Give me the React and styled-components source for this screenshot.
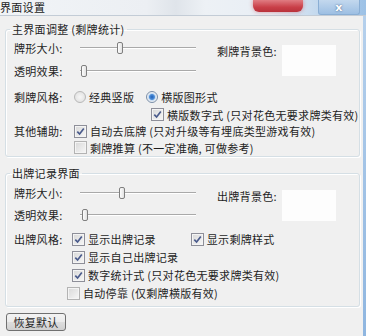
import React from 'react'
import styled, { createGlobalStyle } from 'styled-components'

const GlobalStyle = createGlobalStyle`
  html, body {
    margin: 0;
    padding: 0;
    background: #f0f0f0;
  }
  body {
    font-family: "Noto Sans CJK SC", "Liberation Sans", sans-serif;
    font-size: 11px;
    letter-spacing: 0.3px;
    color: #1e1e1e;
  }
`;

const Window = styled.div`
  width: 366px;
  height: 336px;
  display: flex;
  flex-direction: column;
  overflow: hidden;
  background: #f0f0f0;
`;

const TitleBar = styled.div`
  height: 15px;
  flex: none;
  display: flex;
  align-items: flex-start;
  background: linear-gradient(to right, #f1f4f7 0%, #eceff3 40%, #dfe4ea 48%, #edf1f5 56%, #e8eef5 74%, #c9dcef 85%, #9cc1e6 100%);
  border-bottom: 1px solid #c3ccd6;
`;

const Title = styled.span`
  line-height: 14px;
  color: #222;
`;

const Captions = styled.div`
  margin-left: auto;
  margin-right: 6px;
  display: flex;
  gap: 15px;
`;

const RedPill = styled.div`
  width: 50px;
  height: 12px;
  border-radius: 0 0 6px 6px;
  background: linear-gradient(#e07c82, #c93f48 60%, #b8323b);
  box-shadow: 0 0 4px rgba(200, 60, 70, 0.5);
`;

const CloseButton = styled.div`
  width: 40px;
  height: 14px;
  display: flex;
  align-items: center;
  justify-content: center;
  border-radius: 0 0 3px 3px;
  background: linear-gradient(#c3d8ee, #9dbfe3);
  border: 1px solid #8aaed4;
  border-top: none;
  color: #fff;
  font-family: "DejaVu Sans", sans-serif;
  font-size: 11px;
  font-weight: bold;
  text-shadow: 0 0 2px #3f5f86;
`;

const Body = styled.div`
  flex: 1;
  display: flex;
  min-height: 0;
`;

const Content = styled.div`
  flex: 1;
  display: flex;
  flex-direction: column;
  padding: 6px 3px 0 5px;
`;

const Frame = styled.div`
  width: 4px;
  flex: none;
  background: linear-gradient(#b5d0ec, #8fb6e0);
`;

const GroupBox = styled.fieldset`
  margin: 0 0 ${p => p.$gap || 0}px 0;
  padding: ${p => p.$top}px 0 ${p => p.$bottom}px 8px;
  border: 1px solid #d5dfe5;
  border-radius: 3px;
  box-shadow: inset 1px 1px 0 #fff, 1px 1px 0 #fff;
  min-width: 0;
`;

const Legend = styled.legend`
  margin-left: -4px;
  padding: 0 2px;
  line-height: 14px;
`;

const SliderBlock = styled.div`
  display: flex;
  align-items: flex-start;
`;

const SliderColumn = styled.div`
  display: flex;
  flex-direction: column;
`;

const Row = styled.div`
  display: flex;
  align-items: center;
  height: ${p => p.$h}px;
  padding-left: ${p => p.$indent || 0}px;
  white-space: nowrap;
`;

const Label = styled.span`
  width: ${p => p.$w}px;
  flex: none;
`;

const Options = styled.div`
  display: flex;
  align-items: center;
  gap: ${p => p.$gap || 0}px;
`;

const Track = styled.div`
  position: relative;
  width: 116px;
  height: 0;
  margin-left: 6px;
  border-top: 1px solid #a9a9a9;
  border-bottom: 1px solid #ffffff;
`;

const Thumb = styled.div`
  position: absolute;
  top: -6px;
  width: 4px;
  height: 10px;
  border: 1px solid #7f7f7f;
  border-radius: 2px;
  background: linear-gradient(to right, #fdfdfd, #e2e2e2);
`;

const ColorPicker = styled.div`
  display: flex;
  align-items: flex-start;
  gap: 5px;
  margin-left: 21px;
  padding-top: ${p => p.$top}px;
  white-space: nowrap;
`;

const Swatch = styled.div`
  width: 54px;
  height: 31px;
  margin-top: 2px;
  background: #fdfdfd;
`;

const Option = styled.span`
  display: inline-flex;
  align-items: center;
  gap: 3px;
`;

const RadioDot = styled.span`
  width: 10px;
  height: 10px;
  border-radius: 50%;
  border: 1px solid ${p => (p.$on ? '#7a8ea8' : '#b8b8b8')};
  background: ${p => (p.$on
    ? 'radial-gradient(circle, #1f5fb8 0, #4f8fd8 2.5px, #c8dcf2 3.5px, #f4f4f4 5px)'
    : 'radial-gradient(circle, #f6f6f6 0, #e4e4e4 5px)')};
`;

const Box = styled.span`
  width: 11px;
  height: 11px;
  flex: none;
  display: flex;
  align-items: center;
  justify-content: center;
  border: 1px solid ${p => (p.$on ? '#8e8f99' : '#b3b3b3')};
  background: linear-gradient(135deg, #d8d8d8, #f7f7f7);
  box-shadow: inset 0 0 0 1px #f4f4f4;
`;

const Button = styled.button`
  align-self: flex-start;
  width: 60px;
  height: 18px;
  margin: 6px 0 0 1px;
  padding: 0;
  border: 1px solid #707070;
  border-radius: 3px;
  background: linear-gradient(#f3f3f3 0%, #ebebeb 48%, #dddddd 52%, #d0d0d0 100%);
  font-family: inherit;
  font-size: 11px;
  letter-spacing: 0.3px;
  line-height: 14px;
  color: #1e1e1e;
`;

const Slider = ({ value }) => (
  <Track>
    <Thumb style={{ left: `${value}px` }} />
  </Track>
);

const Radio = ({ on, children }) => (
  <Option>
    <RadioDot $on={on} />
    {children}
  </Option>
);

const Check = ({ on, children }) => (
  <Option>
    <Box $on={on}>
      {on && (
        <svg width="9" height="9" viewBox="0 0 9 9">
          <path d="M1.3 4.6 L3.6 7 L7.8 1.6" fill="none" stroke="#4a5b8c" strokeWidth="1.7" />
        </svg>
      )}
    </Box>
    {children}
  </Option>
);

const App = () => (
  <Window>
    <GlobalStyle />
    <TitleBar>
      <Title>界面设置</Title>
      <Captions>
        <RedPill />
        <CloseButton>x</CloseButton>
      </Captions>
    </TitleBar>
    <Body>
      <Content>
        <GroupBox $top={0} $bottom={0} $gap={9}>
          <Legend>主界面调整 (剩牌统计)</Legend>
          <SliderBlock>
            <SliderColumn>
              <Row $h={23}>
                <Label $w={60}>牌形大小:</Label>
                <Slider value={37} />
              </Row>
              <Row $h={23}>
                <Label $w={60}>透明效果:</Label>
                <Slider value={1} />
              </Row>
            </SliderColumn>
            <ColorPicker $top={7}>
              <span>剩牌背景色:</span>
              <Swatch />
            </ColorPicker>
          </SliderBlock>
          <Row $h={18} style={{ marginTop: 6 }}>
            <Label $w={60}>剩牌风格:</Label>
            <Options $gap={12}>
              <Radio>经典竖版</Radio>
              <Radio on>横版图形式</Radio>
            </Options>
          </Row>
          <Row $h={17} $indent={137}>
            <Check on>横版数字式 (只对花色无要求牌类有效)</Check>
          </Row>
          <Row $h={16}>
            <Label $w={60}>其他辅助:</Label>
            <Check on>自动去底牌 (只对升级等有埋底类型游戏有效)</Check>
          </Row>
          <Row $h={17} $indent={60}>
            <Check>剩牌推算 (不一定准确, 可做参考)</Check>
          </Row>
        </GroupBox>

        <GroupBox $top={2} $bottom={4}>
          <Legend>出牌记录界面</Legend>
          <SliderBlock>
            <SliderColumn>
              <Row $h={22}>
                <Label $w={60}>牌形大小:</Label>
                <Slider value={39} />
              </Row>
              <Row $h={21}>
                <Label $w={60}>透明效果:</Label>
                <Slider value={2} />
              </Row>
            </SliderColumn>
            <ColorPicker $top={6}>
              <span>出牌背景色:</span>
              <Swatch />
            </ColorPicker>
          </SliderBlock>
          <Row $h={18} style={{ marginTop: 5 }}>
            <Label $w={58}>出牌风格:</Label>
            <Options $gap={35}>
              <Check on>显示出牌记录</Check>
              <Check on>显示剩牌样式</Check>
            </Options>
          </Row>
          <Row $h={18} $indent={58}>
            <Check on>显示自己出牌记录</Check>
          </Row>
          <Row $h={18} $indent={58}>
            <Check on>数字统计式 (只对花色无要求牌类有效)</Check>
          </Row>
          <Row $h={18} $indent={53}>
            <Check>自动停靠 (仅剩牌横版有效)</Check>
          </Row>
        </GroupBox>

        <Button>恢复默认</Button>
      </Content>
      <Frame />
    </Body>
  </Window>
);

export default App;
